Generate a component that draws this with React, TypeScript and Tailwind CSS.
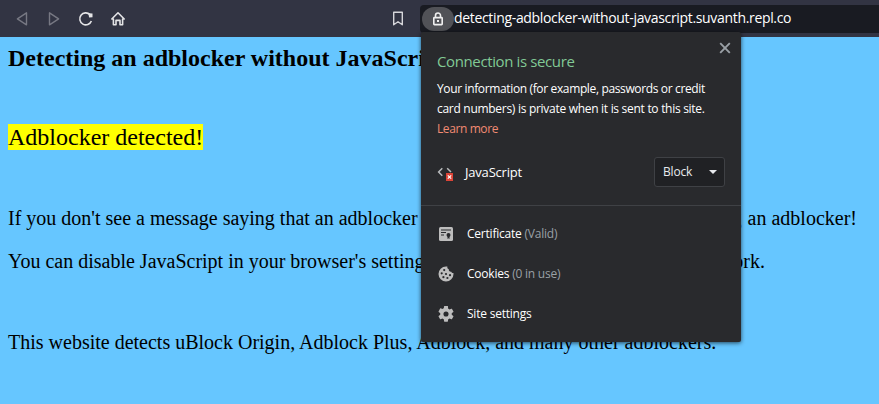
import type { ReactNode } from "react";

const uiFont = "font-['Open_Sans','Noto_Sans',sans-serif]";
const pageFont = "font-['Liberation_Serif','Times_New_Roman',serif]";

function Toolbar() {
  return (
    <header className={`flex h-[37px] shrink-0 items-center bg-[#323443] ${uiFont}`}>
      <div className="flex h-full w-[420px] items-center pl-[14px] text-[#e4e4e6]">
        <svg width="16" height="16" viewBox="0 0 16 16" fill="none" stroke="#777883" strokeWidth="1.4" strokeLinejoin="round">
          <path d="M12.5 1.8v12L3.4 7.8z" />
        </svg>
        <svg className="ml-4" width="16" height="16" viewBox="0 0 16 16" fill="none" stroke="#777883" strokeWidth="1.4" strokeLinejoin="round">
          <path d="M3.5 1.8v12L12.6 7.8z" />
        </svg>
        <svg className="ml-4" width="16" height="16" viewBox="0 0 16 16" fill="none" stroke="currentColor" strokeWidth="1.6">
          <path d="M12 3.6A6 6 0 1 0 13.4 10" />
          <path d="M10.3 2.2l4.2.4v3.6l-3.4.3z" fill="currentColor" stroke="none" />
        </svg>
        <svg className="ml-4" width="16" height="16" viewBox="0 0 16 16" fill="none" stroke="currentColor" strokeWidth="1.6" strokeLinejoin="round" strokeLinecap="round">
          <path d="M1.8 8L8 1.8 14.2 8h-1.6v5.8h-2.6V9.4H6v4.4H3.4V8z" />
        </svg>
        <svg className="ml-[264px]" width="16" height="16" viewBox="0 0 16 16" fill="none" stroke="#d6d6da" strokeWidth="1.4" strokeLinejoin="round">
          <path d="M3.7 1.2h8.6v12.6L8 10.8l-4.3 3z" />
        </svg>
      </div>
      <div className="flex h-7 flex-1 items-center rounded-l bg-[#191b22] pl-0.5">
        <span className="flex h-6 w-8 items-center justify-center rounded-full bg-[#515257]">
          <svg width="16" height="16" viewBox="0 0 16 16" fill="none" stroke="#efefef" strokeWidth="1.6">
            <path d="M5.5 7V4.5a2.5 2.5 0 0 1 5 0V7" />
            <rect x="3.8" y="6.6" width="8.4" height="7" rx="0.6" />
            <path d="M7 10.1h2" strokeWidth="2" />
          </svg>
        </span>
        <span className="-translate-y-px text-[14px] leading-5 tracking-[-0.33px] whitespace-nowrap text-white">
          detecting-adblocker-without-javascript.suvanth.repl.co
        </span>
      </div>
    </header>
  );
}

function MenuRow({ icon, label, detail }: { icon: ReactNode; label: string; detail?: string }) {
  return (
    <div className="flex h-10 items-center pl-[17px]">
      <span className="flex w-[29px] shrink-0">{icon}</span>
      <span className="text-[12px] tracking-[-0.22px] text-white">
        {label}
        {detail && <span className="text-[#9aa0a6]"> {detail}</span>}
      </span>
    </div>
  );
}

function SiteInfo() {
  return (
    <aside className={`absolute top-8 left-[421px] h-[310px] w-80 rounded-[2px] bg-[#292a2d] whitespace-nowrap shadow-[0_1px_4px_rgba(0,0,0,0.65)] ${uiFont}`}>
      <div className="h-[173px] px-4 pt-[17px]">
        <div className="flex items-start justify-between">
          <h2 className="text-[15px] leading-6 tracking-[-0.38px] text-[#81c995]">Connection is secure</h2>
          <svg className="-mt-[7px] -mr-[6px]" width="12" height="12" viewBox="0 0 12 12" stroke="#9aa0a6" strokeWidth="1.9">
            <path d="M1.2 1.2l9.6 9.6M10.8 1.2L1.2 10.8" />
          </svg>
        </div>
        <p className="mt-[6px] text-[12px] leading-5 tracking-[-0.36px] text-white">
          Your information (for example, passwords or credit
          <br />
          <span className="tracking-[-0.29px]">card numbers) is private when it is sent to this site.</span>
          <br />
          <span className="tracking-[-0.4px] text-[#f28b73]">Learn more</span>
        </p>
        <div className="mt-[18px] flex h-[30px] items-center">
          <svg className="mt-0.5" width="17" height="16" viewBox="0 0 17 16" fill="none" stroke="#b9bbbd" strokeWidth="1.5">
            <path d="M5.3 3.2L1.6 7l3.7 3.8M10.2 3.2L14 7" />
            <path d="M9 8h7v8H9z" fill="#db4437" stroke="none" />
            <path d="M10.8 10.3l3.4 3.4M14.2 10.3l-3.4 3.4" stroke="white" strokeWidth="1.2" />
          </svg>
          <span className="mt-0.5 ml-[11px] text-[13px] tracking-[-0.2px] text-white">JavaScript</span>
          <div className="ml-auto flex h-[30px] w-[71px] items-center justify-between rounded-[3px] border border-[#3f4145] bg-[#202124] pr-[7px] pl-2 text-[12px] tracking-[-0.2px] text-[#e8eaed]">
            Block
            <svg width="8" height="4" viewBox="0 0 8 4" fill="currentColor">
              <path d="M0 0h8L4 4z" />
            </svg>
          </div>
        </div>
      </div>
      <div className="border-t border-[#3f4145] pt-2">
        <MenuRow
          label="Certificate"
          detail="(Valid)"
          icon={
            <svg width="16" height="16" viewBox="0 0 16 16">
              <rect x="1" y="1" width="14" height="14" rx="1.5" fill="#bdbdbd" />
              <path d="M3 4h10M3 6.5h5M3 9h3" stroke="#292a2d" strokeWidth="1.2" />
              <circle cx="10.5" cy="9" r="2" fill="#292a2d" />
              <path d="M9.5 9h2v4l-1-.8-1 .8z" fill="#292a2d" />
            </svg>
          }
        />
        <MenuRow
          label="Cookies"
          detail="(0 in use)"
          icon={
            <svg width="16" height="16" viewBox="0 0 16 16">
              <path d="M8 .5A7.5 7.5 0 1 0 15.5 8c0-.4 0-.8-.1-1.1-1 .2-1.8-.3-2.1-1.2-1.7.2-2.7-.9-2.5-2.4C9.6 2.9 9 1.8 9.4.6 9 .5 8.5.5 8 .5z" fill="#bdbdbd" />
              <g fill="#292a2d">
                <circle cx="6.2" cy="4.1" r="1.1" />
                <circle cx="3.7" cy="7.3" r="1.1" />
                <circle cx="8" cy="8" r="1.1" />
                <circle cx="5.4" cy="11.2" r="1.1" />
                <circle cx="9.4" cy="12" r="1.1" />
                <circle cx="12" cy="9.2" r="1.1" />
              </g>
            </svg>
          }
        />
        <MenuRow
          label="Site settings"
          icon={
            <svg width="16" height="16" viewBox="2 2 20 20" fill="#bdbdbd">
              <path d="M19.14 12.94c.04-.3.06-.61.06-.94s-.02-.64-.07-.94l2.03-1.58a.49.49 0 0 0 .12-.61l-1.92-3.32a.49.49 0 0 0-.59-.22l-2.39.96a7 7 0 0 0-1.62-.94l-.36-2.54A.48.48 0 0 0 13.92 2h-3.84a.47.47 0 0 0-.47.41l-.36 2.54c-.59.24-1.13.57-1.62.94l-2.39-.96a.48.48 0 0 0-.59.22L2.74 8.87a.47.47 0 0 0 .12.61l2.03 1.58c-.05.3-.09.63-.09.94s.02.64.07.94l-2.03 1.58a.49.49 0 0 0-.12.61l1.92 3.32c.12.22.37.29.59.22l2.39-.96c.5.38 1.03.7 1.62.94l.36 2.54c.05.24.24.41.48.41h3.84c.24 0 .44-.17.47-.41l.36-2.54a7 7 0 0 0 1.62-.94l2.39.96c.22.08.47 0 .59-.22l1.92-3.32a.47.47 0 0 0-.12-.61zM12 15.2A3.2 3.2 0 1 1 12 8.8a3.2 3.2 0 0 1 0 6.4z" />
            </svg>
          }
        />
      </div>
    </aside>
  );
}

export default function App() {
  return (
    <div className="relative flex h-[404px] w-[879px] flex-col overflow-hidden bg-[#66c6ff]">
      <Toolbar />
      <main className={`flex flex-col px-2 whitespace-nowrap text-black ${pageFont}`}>
        <h1 className="mt-2 text-[24px] leading-[27px] font-bold">Detecting an adblocker without JavaScript</h1>
        <p className="mt-[52px] text-[24px] leading-[27px]">
          <mark className="bg-[#ffff00] text-black">Adblocker detected!</mark>
        </p>
        <p className="mt-[56px] flex w-[849px] justify-between text-[20px] leading-[23px]">
          <span>If you don't see a message saying that an adblocker</span>
          <span>using<span className="ml-px"> an adblocker!</span></span>
        </p>
        <p className="mt-5 flex w-[757px] justify-between text-[20px] leading-[23px]">
          <span>You can disable JavaScript in your browser's settings</span>
          <span>work.</span>
        </p>
        <p className="mt-[58px] text-[20px] leading-[23px]">
          This website detects uBlock Origin, Adblock Plus, Adblock, and many other adblockers.
        </p>
      </main>
      <SiteInfo />
    </div>
  );
}
